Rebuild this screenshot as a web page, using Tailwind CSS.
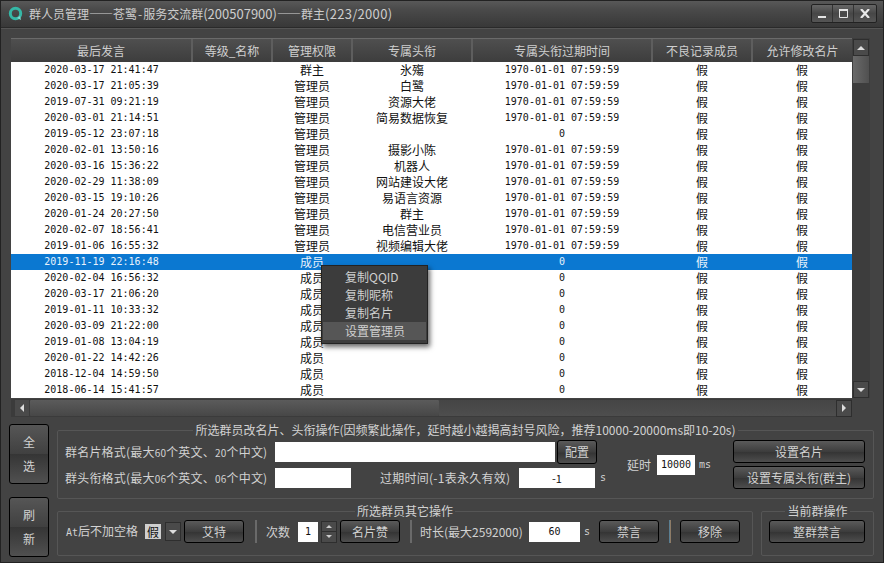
<!DOCTYPE html>
<html lang="zh-CN">
<head>
    <meta charset="UTF-8">
    <title>群人员管理</title>
    <script src="https://cdn.jsdelivr.net/npm/@tailwindcss/browser@4"></script>
</head>
<body class="bg-[#434343]">
<div class="relative w-[884px] h-[563px] overflow-hidden bg-[#434343] text-[12px] leading-4 text-[#d2d2d2] font-['Noto_Sans_CJK_SC','Noto_Sans',sans-serif]">

    <!-- Title bar -->
    <div class="flex items-center h-[28px] pl-2 pr-[7px] border-b border-[#2a2a2a] shadow-[0_1px_0_#555] bg-[linear-gradient(#5a5a5a,#4a4a4a_35%,#383838)]">
        <svg class="w-[15px] h-[15px] mr-[6px]" viewBox="0 0 15 15">
            <circle cx="7.5" cy="7.5" r="5.2" fill="none" stroke="#35b7a6" stroke-width="3"/>
            <path d="M9 12l4 2-1-4z" fill="#7fd8cc"/>
        </svg>
        <span class="text-[#cdcdcd] whitespace-nowrap">群人员管理——苍鹭<span class="px-[1px]">-</span>服务交流群<span class="text-[13px]">(200507900)</span>——群主<span class="text-[13px] tracking-[0.3px]">(223/2000)</span></span>
        <div class="ml-auto flex h-[19px] border border-[#222] rounded-[2px] bg-[linear-gradient(#666,#474747_50%,#555)]">
            <div class="w-[21px] flex items-center justify-center border-r border-[#333]">
                <svg class="w-[9px] h-[9px]" viewBox="0 0 9 9"><path d="M0 7h8v2H0z" fill="#e4e4e4"/></svg>
            </div>
            <div class="w-[21px] flex items-center justify-center border-r border-[#333]">
                <svg class="w-[9px] h-[9px]" viewBox="0 0 9 9"><path d="M.5 1.5h8v7h-8z" fill="none" stroke="#e4e4e4"/><path d="M0 0h9v2H0z" fill="#e4e4e4"/></svg>
            </div>
            <div class="w-[22px] flex items-center justify-center">
                <svg class="w-[10px] h-[9px]" viewBox="0 0 10 9"><path d="M1 0l8 9M9 0L1 9" stroke="#e8e8e8" stroke-width="2.2"/></svg>
            </div>
        </div>
    </div>

    <!-- Table with scrollbars -->
    <div class="ml-[11px] mt-[10px] w-[859px]">
        <div class="flex">
            <div class="w-[841px]">
                <div class="flex h-[24px] border-t border-[#6a6a6a] bg-[linear-gradient(#4f4f4f,#3d3d3d)] text-[#cfcfcf]">
                    <div class="w-[182px] flex items-center justify-center border-r-2 border-[#5e5e5e]">最后发言</div>
                    <div class="w-[80px] flex items-center justify-center border-r-2 border-[#5e5e5e]">等级_名称</div>
                    <div class="w-[80px] flex items-center justify-center border-r-2 border-[#5e5e5e]">管理权限</div>
                    <div class="w-[120px] flex items-center justify-center border-r-2 border-[#5e5e5e]">专属头衔</div>
                    <div class="w-[180px] flex items-center justify-center border-r-2 border-[#5e5e5e]">专属头衔过期时间</div>
                    <div class="w-[100px] flex items-center justify-center border-r-2 border-[#5e5e5e]">不良记录成员</div>
                    <div class="w-[99px] flex items-center justify-center">允许修改名片</div>
                </div>
                <div id="rows" class="bg-white text-[#111]"></div>
            </div>
            <!-- Vertical scrollbar -->
            <div class="w-[18px] h-[360px] flex flex-col items-center pt-px bg-[#3d3d3d]">
                <div class="w-[16px] h-[17px] flex items-center justify-center border border-[#2e2e2e] bg-[#4a4a4a]">
                    <svg class="w-[8px] h-[4px]" viewBox="0 0 8 4"><path d="M4 0l4 4H0z" fill="#ddd"/></svg>
                </div>
                <div class="w-[16px] h-[27px] bg-[linear-gradient(90deg,#6a6a6a,#505050)]"></div>
                <div class="flex-1"></div>
                <div class="w-[16px] h-[17px] flex items-center justify-center border border-[#2e2e2e] bg-[#4a4a4a]">
                    <svg class="w-[8px] h-[4px]" viewBox="0 0 8 4"><path d="M0 0h8L4 4z" fill="#ddd"/></svg>
                </div>
            </div>
        </div>
        <!-- Horizontal scrollbar -->
        <div class="flex items-center w-[841px] h-[18px] mt-px bg-[#3b3b3b]">
            <div class="w-[14px] h-[16px] ml-[4px] flex items-center justify-center bg-[#4a4a4a]">
                <svg class="w-[4px] h-[8px]" viewBox="0 0 4 8"><path d="M4 0v8L0 4z" fill="#ddd"/></svg>
            </div>
            <div class="w-[409px] h-[16px] ml-px rounded-[1px] bg-[linear-gradient(#5b5b5b,#474747)]"></div>
            <div class="flex-1 h-[16px] bg-[linear-gradient(#454545,#4e4e4e)]"></div>
            <div class="w-[16px] h-[17px] flex items-center justify-center border border-[#2e2e2e] bg-[#4a4a4a]">
                <svg class="w-[4px] h-[8px]" viewBox="0 0 4 8"><path d="M0 0v8l4-4z" fill="#ddd"/></svg>
            </div>
        </div>
    </div>

    <!-- Operation panels -->
    <div class="flex mt-[5px] ml-[9px]">
        <div class="flex flex-col w-[40px] pt-[2px] mr-[8px] gap-[13px]">
            <div class="h-[60px] flex flex-col items-center justify-center gap-[8px] border border-black rounded-[3px] bg-[linear-gradient(#565656,#404040_50%,#353535_50%,#505050)]"><span>全</span><span>选</span></div>
            <div class="h-[60px] flex flex-col items-center justify-center gap-[8px] border border-black rounded-[3px] bg-[linear-gradient(#565656,#404040_50%,#353535_50%,#505050)]"><span>刷</span><span>新</span></div>
        </div>
        <div class="w-[817px]">
            <fieldset class="h-[77px] border border-[#565656] rounded-[2px]">
                <legend class="mx-auto px-[2px] whitespace-nowrap">所选群员改名片、头衔操作(因频繁此操作&#xFF0C;延时越小越揭高封号风险&#xFF0C;推荐10000-20000ms即10-20s)</legend>
                <div class="flex pt-[2px] pl-[7px]">
                    <div class="flex flex-col w-[560px]">
                        <div class="flex items-center h-[24px]">
                            <span class="w-[210px] tracking-[0.2px] whitespace-nowrap">群名片格式(最大<span class="text-[10px]">60</span>个英文、<span class="text-[10px]">20</span>个中文)</span>
                            <div class="w-[280px] h-[20px] bg-white"></div>
                            <button class="w-[40px] h-[24px] ml-[2px] border border-black rounded-[3px] text-[#d2d2d2] bg-[linear-gradient(#5a5a5a,#3d3d3d_50%,#353535_55%,#4e4e4e)]">配置</button>
                        </div>
                        <div class="flex items-center h-[24px] mt-[2px]">
                            <span class="w-[210px] tracking-[0.2px] whitespace-nowrap">群头衔格式(最大<span class="text-[10px]">06</span>个英文、<span class="text-[10px]">06</span>个中文)</span>
                            <div class="w-[76px] h-[20px] bg-white"></div>
                            <span class="ml-[29px] w-[139px] tracking-[0.25px] whitespace-nowrap">过期时间(-1表永久有效)</span>
                            <div class="w-[76px] h-[20px] bg-white text-[#111] flex items-center justify-center text-[11px]">-1</div>
                            <span class="ml-[5px] font-['DejaVu_Sans_Mono'] text-[10px]">s</span>
                        </div>
                    </div>
                    <div class="flex items-center h-[50px] pl-[2px] w-[108px]">
                        <span>延时</span>
                        <div class="w-[38px] h-[20px] ml-[6px] bg-white text-[#111] flex items-center justify-center font-['DejaVu_Sans_Mono'] text-[10px]">10000</div>
                        <span class="ml-[4px] font-['DejaVu_Sans_Mono'] text-[10px]">ms</span>
                    </div>
                    <div class="flex flex-col w-[132px] gap-[3px]">
                        <button class="h-[23px] border border-black rounded-[3px] text-[#d2d2d2] bg-[linear-gradient(#5a5a5a,#3d3d3d_50%,#353535_55%,#4e4e4e)]">设置名片</button>
                        <button class="h-[23px] border border-black rounded-[3px] text-[#d2d2d2] bg-[linear-gradient(#5a5a5a,#3d3d3d_50%,#353535_55%,#4e4e4e)]">设置专属头衔(群主)</button>
                    </div>
                </div>
            </fieldset>
            <div class="flex mt-[4px] gap-[8px]">
                <fieldset class="w-[696px] h-[53px] border border-[#565656] rounded-[2px]">
                    <legend class="mx-auto px-[2px]">所选群员其它操作</legend>
                    <div class="flex items-center h-[23px] mt-px pl-[8px]">
                        <span class="w-[79px]"><span class="font-['DejaVu_Sans_Mono'] text-[10px]">At</span>后不加空格</span>
                        <span class="w-[16px] h-[15px] flex items-center justify-center bg-[#cfcfcf] text-[#111]">假</span>
                        <div class="w-[16px] h-[19px] ml-[4px] flex items-center justify-center border border-[#2e2e2e] bg-[#4a4a4a]">
                            <svg class="w-[8px] h-[4px]" viewBox="0 0 8 4"><path d="M0 0h8L4 4z" fill="#ddd"/></svg>
                        </div>
                        <button class="w-[60px] h-[23px] ml-[3px] border border-black rounded-[3px] text-[#d2d2d2] bg-[linear-gradient(#5a5a5a,#3d3d3d_50%,#353535_55%,#4e4e4e)]">艾特</button>
                        <div class="w-[2px] h-[23px] ml-[11px] bg-[#6a6a6a]"></div>
                        <span class="ml-[9px] w-[32px]">次数</span>
                        <div class="w-[20px] h-[20px] bg-white text-[#111] flex items-center justify-center font-['DejaVu_Sans_Mono'] text-[10px]">1</div>
                        <div class="w-[16px] h-[22px] ml-[3px] flex flex-col border border-[#2e2e2e] bg-[#4a4a4a]">
                            <div class="flex-1 flex items-center justify-center border-b border-[#2e2e2e]"><svg class="w-[6px] h-[3px]" viewBox="0 0 6 3"><path d="M3 0l3 3H0z" fill="#ccc"/></svg></div>
                            <div class="flex-1 flex items-center justify-center"><svg class="w-[6px] h-[3px]" viewBox="0 0 6 3"><path d="M0 0h6L3 3z" fill="#ccc"/></svg></div>
                        </div>
                        <button class="w-[60px] h-[23px] ml-[3px] border border-black rounded-[3px] text-[#d2d2d2] bg-[linear-gradient(#5a5a5a,#3d3d3d_50%,#353535_55%,#4e4e4e)]">名片赞</button>
                        <div class="w-[2px] h-[23px] ml-[10px] bg-[#6a6a6a]"></div>
                        <span class="ml-[8px] w-[109px] whitespace-nowrap">时长(最大2592000)</span>
                        <div class="w-[51px] h-[20px] bg-white text-[#111] flex items-center justify-center font-['DejaVu_Sans_Mono'] text-[10px]">60</div>
                        <span class="ml-[4px] w-[15px] font-['DejaVu_Sans_Mono'] text-[10px]">s</span>
                        <button class="w-[60px] h-[23px] border border-black rounded-[3px] text-[#d2d2d2] bg-[linear-gradient(#5a5a5a,#3d3d3d_50%,#353535_55%,#4e4e4e)]">禁言</button>
                        <div class="w-[2px] h-[23px] ml-[10px] bg-[linear-gradient(90deg,#3f7fa8,#a87a50)]"></div>
                        <button class="w-[60px] h-[23px] ml-[9px] border border-black rounded-[3px] text-[#d2d2d2] bg-[linear-gradient(#5a5a5a,#3d3d3d_50%,#353535_55%,#4e4e4e)]">移除</button>
                    </div>
                </fieldset>
                <fieldset class="w-[113px] h-[53px] border border-[#565656] rounded-[2px]">
                    <legend class="mx-auto px-[2px]">当前群操作</legend>
                    <div class="mt-px pl-[7px]">
                        <button class="w-[96px] h-[23px] border border-black rounded-[3px] text-[#d2d2d2] bg-[linear-gradient(#5a5a5a,#3d3d3d_50%,#353535_55%,#4e4e4e)]">整群禁言</button>
                    </div>
                </fieldset>
            </div>
        </div>
    </div>

    <!-- Context menu -->
    <div class="absolute left-[321px] top-[265px] w-[107px] h-[79px] pt-[2px] px-px border border-[#222] bg-[#3c3c3c] shadow-[2px_3px_5px_rgba(0,0,0,0.6)] text-[#cfcfcf]">
        <div class="h-[18px] pl-[22px] flex items-center">复制QQID</div>
        <div class="h-[18px] pl-[22px] flex items-center">复制昵称</div>
        <div class="h-[18px] pl-[22px] flex items-center">复制名片</div>
        <div class="h-[18px] pl-[22px] flex items-center bg-[#565656]">设置管理员</div>
    </div>

    <!-- Window edge -->
    <div class="absolute inset-0 border border-[#222] pointer-events-none"></div>
</div>

<script>
    // [last speak, role, title, title expiry]
    const members = [
        ['2020-03-17 21:41:47', '群主', '氷殤', 1],
        ['2020-03-17 21:05:39', '管理员', '白鹭', 1],
        ['2019-07-31 09:21:19', '管理员', '资源大佬', 1],
        ['2020-03-01 21:14:51', '管理员', '简易数据恢复', 1],
        ['2019-05-12 23:07:18', '管理员', '', 0],
        ['2020-02-01 13:50:16', '管理员', '摄影小陈', 1],
        ['2020-03-16 15:36:22', '管理员', '机器人', 1],
        ['2020-02-29 11:38:09', '管理员', '网站建设大佬', 1],
        ['2020-03-15 19:10:26', '管理员', '易语言资源', 1],
        ['2020-01-24 20:27:50', '管理员', '群主', 1],
        ['2020-02-07 18:56:41', '管理员', '电信营业员', 1],
        ['2019-01-06 16:55:32', '管理员', '视频编辑大佬', 1],
        ['2019-11-19 22:16:48', '成员', '', 0],
        ['2020-02-04 16:56:32', '成员', '', 0],
        ['2020-03-17 21:06:20', '成员', '', 0],
        ['2019-01-11 10:33:32', '成员', '', 0],
        ['2020-03-09 21:22:00', '成员', '', 0],
        ['2019-01-08 13:04:19', '成员', '', 0],
        ['2020-01-22 14:42:26', '成员', '', 0],
        ['2018-12-04 14:59:50', '成员', '', 0],
        ['2018-06-14 15:41:57', '成员', '', 0]
    ];

    document.getElementById('rows').innerHTML = members.map((m, i) => `
        <div class="flex h-[16px] items-center text-center whitespace-nowrap ${i === 12 ? 'bg-[#0b78d1] text-[#e8f2fb]' : ''}">
            <div class="w-[181px] font-['DejaVu_Sans_Mono'] text-[10px]">${m[0]}</div>
            <div class="w-[80px]"></div>
            <div class="w-[80px]">${m[1]}</div>
            <div class="w-[120px]">${m[2]}</div>
            <div class="w-[180px] font-['DejaVu_Sans_Mono'] text-[10px]">${m[3] ? '1970-01-01 07:59:59' : '0'}</div>
            <div class="w-[100px]">假</div>
            <div class="w-[100px]">假</div>
        </div>
    `).join('');
</script>
</body>
</html>
